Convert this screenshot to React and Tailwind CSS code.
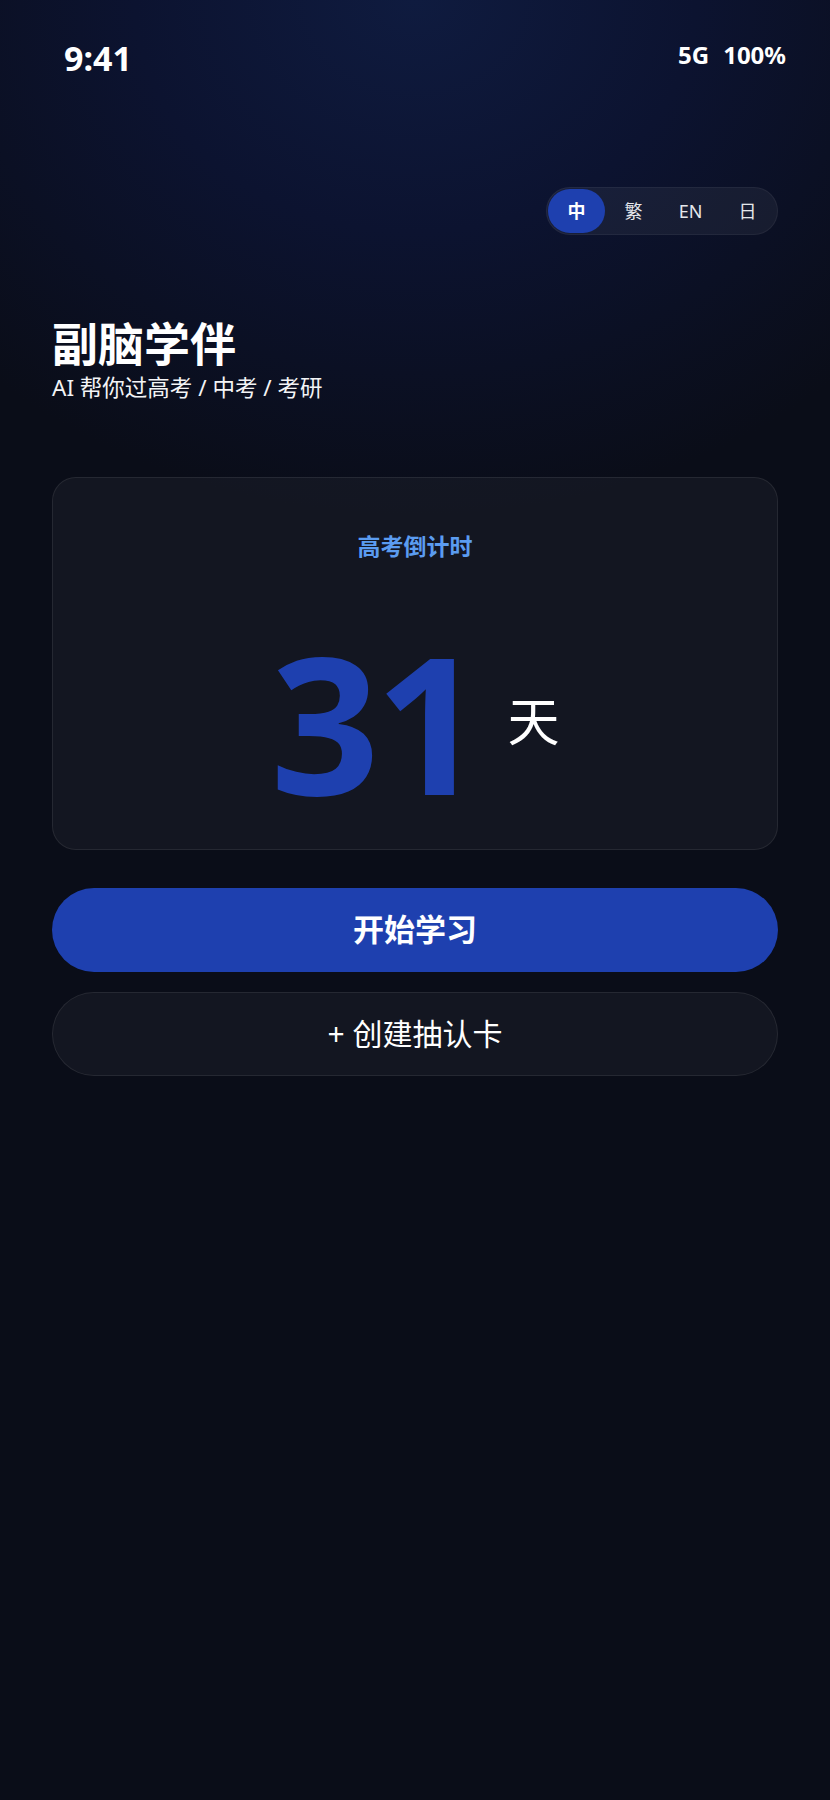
export default function App() {
  const langs = ["中", "繁", "EN", "日"];
  return (
    <div
      className="relative min-h-[1800px] w-full overflow-hidden bg-[#0a0d18] text-white"
      style={{ fontFamily: '"Noto Sans", "Noto Sans CJK SC", sans-serif' }}
    >
      <div className="pointer-events-none absolute inset-x-0 top-0 h-[515px] bg-[radial-gradient(ellipse_75%_100%_at_50%_0%,#0f1b3f_0%,#0c1330_45%,#0a0d18_100%)]" />
      <div className="relative flex flex-col">
        {/* status bar */}
        <div className="flex items-start justify-between pl-[64px] pr-[44px] pt-[41px]">
          <span className="text-[34px] font-bold leading-none">9:41</span>
          <div className="mt-[2px] flex gap-[14px] text-[24px] font-bold leading-none">
            <span>5G</span>
            <span>100%</span>
          </div>
        </div>

        <div className="flex flex-col px-[52px]">
          {/* language toggle */}
          <div className="mt-[112px] flex self-end rounded-full border border-white/[0.05] bg-white/[0.05] p-[1px]">
            {langs.map((l, i) => (
              <div
                key={l}
                className={
                  i === 0
                    ? "flex h-[44px] w-[57px] items-center justify-center rounded-full bg-[#1e40af] text-[18px] font-bold text-white"
                    : "flex h-[44px] w-[57px] items-center justify-center rounded-full text-[18px] text-gray-200"
                }
              >
                {l}
              </div>
            ))}
          </div>

          {/* title */}
          <h1 className="mt-[85px] text-[46px] font-bold leading-none text-white">副脑学伴</h1>
          <p className="mt-[11px] text-[22.5px] leading-none text-gray-100">AI 帮你过高考 / 中考 / 考研</p>

          {/* countdown card */}
          <div className="mt-[77px] flex flex-col items-center rounded-3xl border border-white/[0.08] bg-white/[0.04] pt-[57px] pb-[32px]">
            <div className="text-[23px] font-bold leading-none text-[#5b9cf0]">高考倒计时</div>
            <div className="mt-[68px] flex items-center">
              <span className="text-[191px] font-bold leading-none tracking-tight text-[#1e40af]">31</span>
              <span className="ml-7 text-[52px] leading-none text-white">天</span>
            </div>
          </div>

          {/* buttons */}
          <button className="mt-[38px] flex h-[84px] items-center justify-center rounded-full bg-[#1e40af] text-[31px] font-bold text-white">
            开始学习
          </button>
          <button className="mt-[20px] flex h-[84px] items-center justify-center rounded-full border border-white/[0.08] bg-white/[0.04] text-[30px] text-white">
            + 创建抽认卡
          </button>
        </div>
      </div>
    </div>
  );
}
